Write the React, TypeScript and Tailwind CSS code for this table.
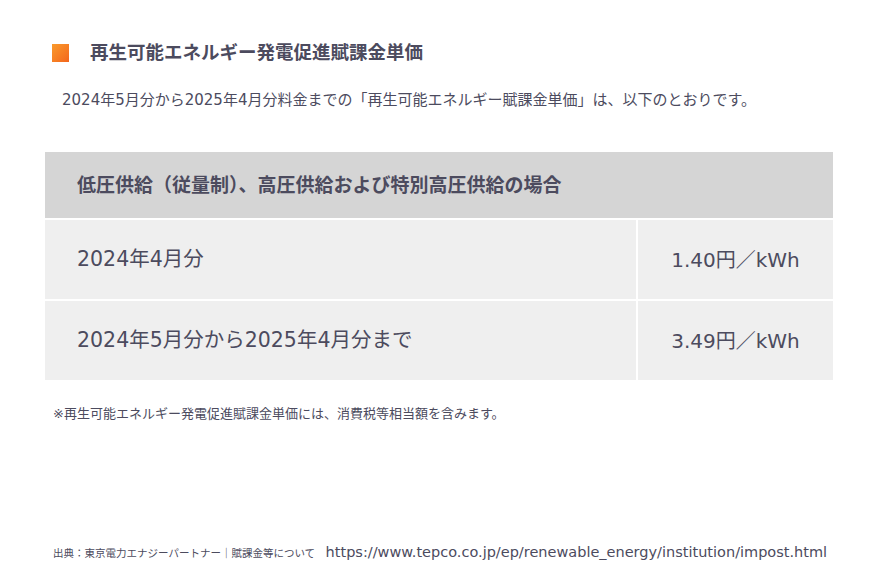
const rows = [
  { label: "2024年4月分", price: "1.40円／kWh" },
  { label: "2024年5月分から2025年4月分まで", price: "3.49円／kWh" },
];

export default function App() {
  return (
    <div className="w-[870px] h-[584px] bg-white text-[#4c4b5e] font-['DejaVu_Sans','Noto_Sans_CJK_JP',sans-serif] flex flex-col">
      <div className="flex items-center pl-[52px] pt-[43px]">
        <span className="w-[17px] h-[18px] bg-gradient-to-br from-[#f99a2c] to-[#f3651c]" />
        <h1 className="ml-[21px] text-[18.5px] font-bold leading-[20px]">再生可能エネルギー発電促進賦課金単価</h1>
      </div>

      <p className="pl-[62px] pt-[27px] text-[15px] leading-[20px]">
        2024年5月分から2025年4月分料金までの「再生可能エネルギー賦課金単価」は、以下のとおりです。
      </p>

      <div className="mx-[45px] w-[788px] mt-[42px] flex flex-col">
        <div className="h-[66px] bg-[#d5d5d5] flex items-center pl-[32px]">
          <span className="text-[19px] font-bold">低圧供給（従量制）、高圧供給および特別高圧供給の場合</span>
        </div>
        {rows.map((r, i) => (
          <div key={i} className="flex h-[81px] border-t-2 border-white">
            <div className="w-[591px] bg-[#efefef] flex items-center pl-[32px] text-[20.5px]">{r.label}</div>
            <div className="w-[2px] bg-white" />
            <div className="flex-1 bg-[#efefef] flex items-center justify-center text-[20px]">{r.price}</div>
          </div>
        ))}
      </div>

      <p className="pl-[53px] pt-[25px] text-[13px] leading-[18px]">
        ※再生可能エネルギー発電促進賦課金単価には、消費税等相当額を含みます。
      </p>

      <p className="pl-[53px] mt-auto mb-[20px] flex items-baseline whitespace-nowrap">
        <span className="text-[10.5px]">出典：東京電力エナジーパートナー｜賦課金等について　</span>
        <span className="text-[14.5px]">https://www.tepco.co.jp/ep/renewable_energy/institution/impost.html</span>
      </p>
    </div>
  );
}
